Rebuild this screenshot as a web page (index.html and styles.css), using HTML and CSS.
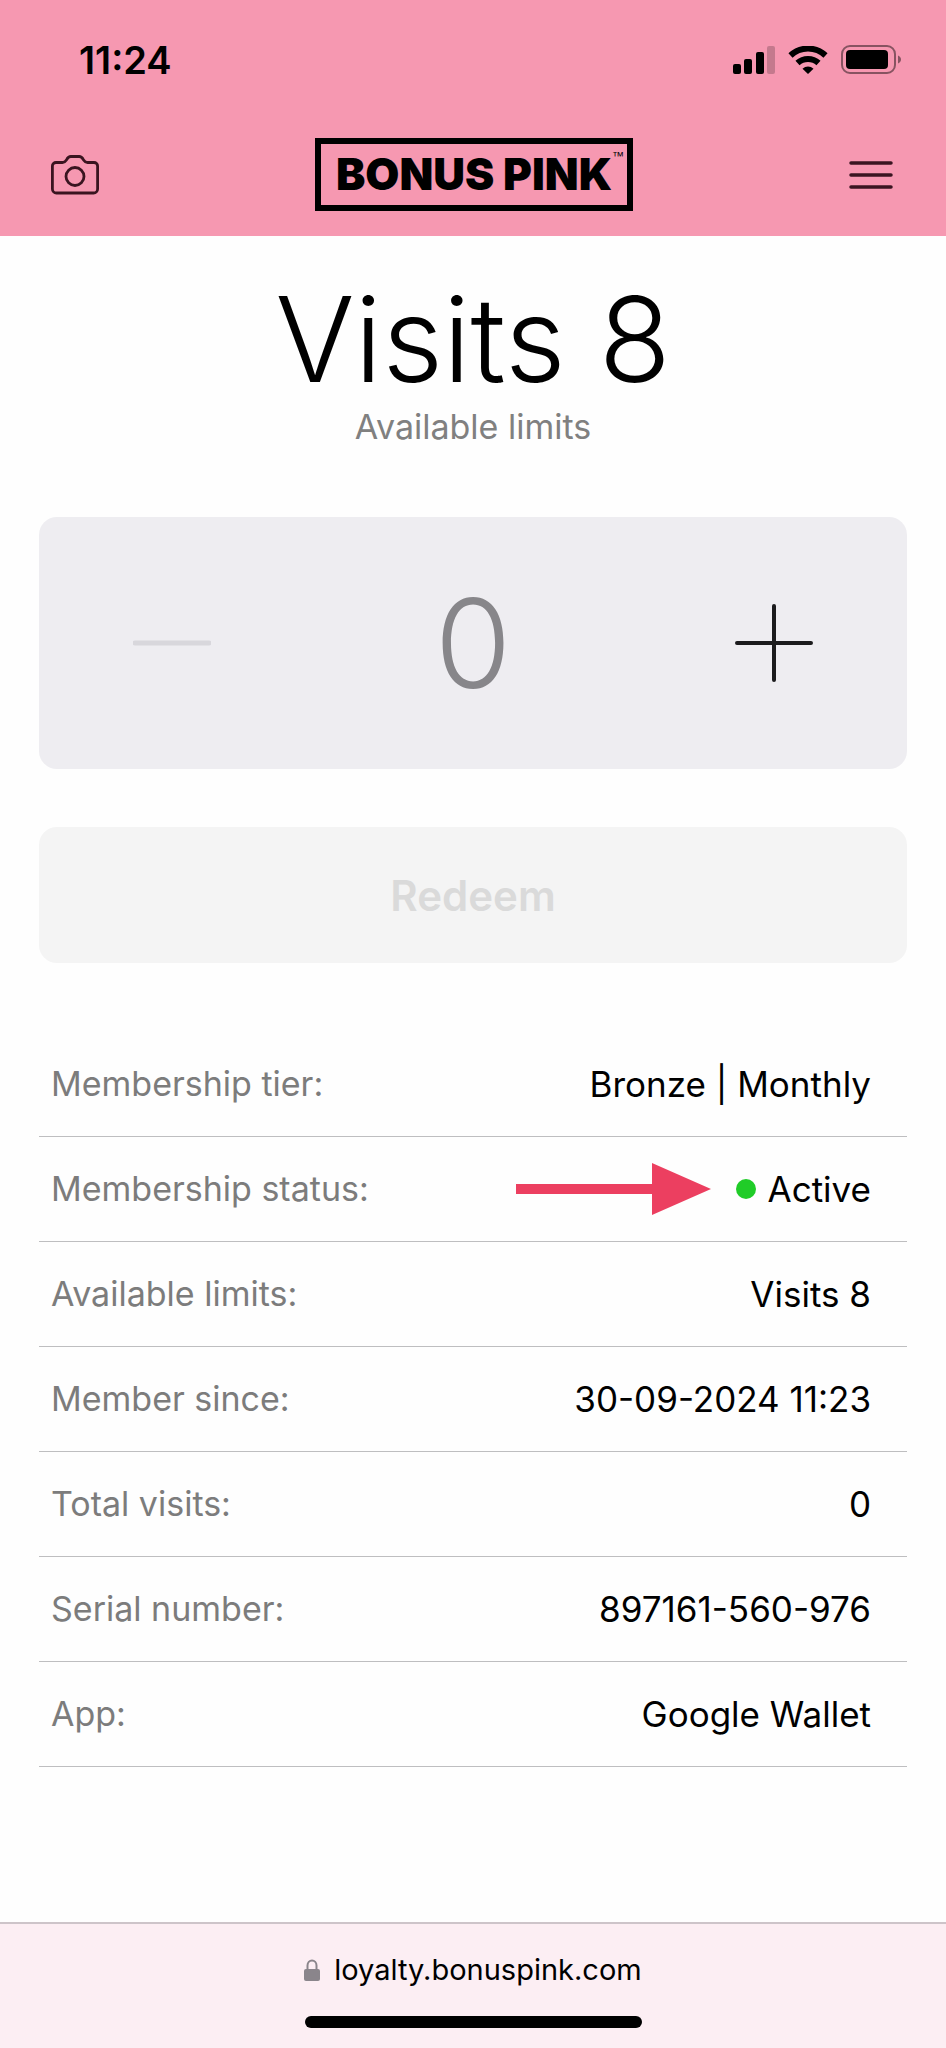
FILE: index.html
```
<!DOCTYPE html>
<html lang="en">
<head>
    <meta charset="UTF-8">
    <meta name="viewport" content="width=device-width, initial-scale=1.0">
    <title>Bonus Pink</title>
    <link rel="stylesheet" href="styles.css">
</head>
<body>
    <header class="header">
        <div class="status-bar">
            <span class="time">11:24</span>
            <div class="status-icons">
                <svg width="42" height="28" viewBox="0 0 42 28">
                    <rect x="0" y="18" width="8" height="10" rx="2"/>
                    <rect x="11" y="13" width="8" height="15" rx="2"/>
                    <rect x="23" y="6" width="8" height="22" rx="2"/>
                    <rect x="34" y="0" width="8" height="28" rx="2" opacity="0.2"/>
                </svg>
                <svg width="40" height="28" viewBox="0 0 40 28">
                    <path d="M2.5 9.5a25.500 25.500 0 0 1 35 0" fill="none" stroke="#000" stroke-width="6"/>
                    <path d="M9.500 17a15.500 15.500 0 0 1 21 0" fill="none" stroke="#000" stroke-width="6"/>
                    <path d="M20 28l-5.500-5.200a8 8 0 0 1 11 0z"/>
                </svg>
                <svg width="61" height="29" viewBox="0 0 61 29">
                    <rect x="1" y="1" width="53" height="27" rx="8" fill="none" stroke="#000" stroke-width="2" opacity="0.45"/>
                    <rect x="5" y="5" width="42" height="19" rx="4"/>
                    <path d="M57 10.500c4 1.500 4 6.500 0 8z" opacity="0.45"/>
                </svg>
            </div>
        </div>
        <nav class="navbar">
            <button type="button" class="icon-button" aria-label="Scan">
                <svg width="48" height="40" viewBox="0 0 48 40" fill="none" stroke="#3a1420" stroke-width="2.800" stroke-linejoin="round">
                    <path d="M5 7.500h6.500c2.500 0 3.200-1.500 4.200-3 1-1.700 1.800-3 4-3h8.600c2.200 0 3 1.300 4 3 1 1.500 1.700 3 4.200 3H43a3.600 3.600 0 0 1 3.600 3.600V34a4 4 0 0 1-4 4H5.400a4 4 0 0 1-4-4V11.100A3.600 3.600 0 0 1 5 7.500z"/>
                    <circle cx="24" cy="21.500" r="9"/>
                </svg>
            </button>
            <a href="#" class="logo">BONUS PINK<span class="tm">™</span></a>
            <button type="button" class="icon-button" aria-label="Menu">
                <svg width="44" height="40" viewBox="0 0 44 40" stroke="#3a1420" stroke-width="3.500" stroke-linecap="round">
                    <path d="M2 8h40M2 20h40M2 32h40"/>
                </svg>
            </button>
        </nav>
    </header>

    <main class="content">
        <h1 class="title">Visits 8</h1>
        <p class="subtitle">Available limits</p>

        <div class="stepper">
            <button type="button" id="minus" aria-label="Decrease" disabled>
                <svg width="78" height="78" viewBox="0 0 78 78" stroke="#d8d7dc" stroke-width="5" stroke-linecap="round">
                    <path d="M2 39h74"/>
                </svg>
            </button>
            <output class="count">0</output>
            <button type="button" id="plus" aria-label="Increase">
                <svg width="78" height="78" viewBox="0 0 78 78" stroke="#1b1b1d" stroke-width="4" stroke-linecap="round">
                    <path d="M2 39h74M39 2v74"/>
                </svg>
            </button>
        </div>

        <button type="button" class="redeem" disabled>Redeem</button>

        <table class="details">
            <tr>
                <th scope="row">Membership tier:</th>
                <td>Bronze | Monthly</td>
            </tr>
            <tr>
                <th scope="row">Membership status:</th>
                <td>
                    <div class="state">
                        <svg class="arrow" width="195" height="52" viewBox="0 0 195 52" fill="#ec3f60">
                            <path d="M0 21h136V0l59 26-59 26V31H0z"/>
                        </svg>
                        <span class="dot"></span>
                        <span>Active</span>
                    </div>
                </td>
            </tr>
            <tr>
                <th scope="row">Available limits:</th>
                <td>Visits 8</td>
            </tr>
            <tr>
                <th scope="row">Member since:</th>
                <td>30-09-2024 11:23</td>
            </tr>
            <tr>
                <th scope="row">Total visits:</th>
                <td>0</td>
            </tr>
            <tr>
                <th scope="row">Serial number:</th>
                <td>897161-560-976</td>
            </tr>
            <tr>
                <th scope="row">App:</th>
                <td>Google Wallet</td>
            </tr>
        </table>
    </main>

    <footer class="browser-bar">
        <div class="address">
            <svg width="16" height="22" viewBox="0 0 16 22">
                <path d="M3.500 11V6.500a4.500 5 0 0 1 9 0V11" fill="none" stroke="#8a858b" stroke-width="2"/>
                <rect x="0" y="10" width="16" height="12" rx="2" fill="#8a858b"/>
            </svg>
            <span>loyalty.bonuspink.com</span>
        </div>
        <div class="home-indicator"></div>
    </footer>
</body>
</html>
```
FILE: styles.css
```
* {
    box-sizing: border-box;
}
body {
    font-family: Inter, "Liberation Sans", sans-serif;
    margin: 0;
    min-height: 100vh;
    display: flex;
    flex-direction: column;
    background: #fefefe;
    color: #000;
}
button {
    padding: 0;
    border: none;
    background: none;
    font-family: inherit;
    cursor: pointer;
}
button:disabled {
    cursor: default;
}
svg {
    display: block;
}
.header {
    background: #f698b1;
}
.status-bar {
    display: flex;
    justify-content: space-between;
    align-items: center;
    height: 113px;
    padding: 6px 44px 0 79px;
}
.time {
    font-size: 38px;
    font-weight: 600;
}
.status-icons {
    display: flex;
    align-items: center;
    gap: 13px;
}
.navbar {
    display: flex;
    justify-content: space-between;
    align-items: center;
    height: 123px;
    padding: 0 53px 0 51px;
}
.logo {
    position: relative;
    padding: 0 15px;
    border: 6px solid #000;
    color: #000;
    font-size: 44px;
    font-weight: 900;
    line-height: 61px;
    text-decoration: none;
    white-space: nowrap;
}
.tm {
    position: absolute;
    top: 4px;
    right: 3px;
    font-family: "Liberation Sans", sans-serif;
    font-size: 12px;
    font-weight: 400;
    line-height: 16px;
}
.content {
    flex: 1;
    padding: 41px 39px;
}
.title {
    margin: 0;
    font-size: 118px;
    font-weight: 300;
    line-height: 124px;
    text-align: center;
}
.subtitle {
    margin: 0;
    color: #808080;
    font-size: 34px;
    line-height: 52px;
    text-align: center;
}
.stepper {
    display: grid;
    grid-template-columns: 266px 1fr 266px;
    align-items: center;
    height: 252px;
    margin-top: 64px;
    border-radius: 18px;
    background: #eeedf1;
}
.stepper button {
    display: flex;
    justify-content: center;
}
.count {
    color: #87868a;
    font-size: 124px;
    font-weight: 300;
    line-height: 124px;
    text-align: center;
}
.redeem {
    display: block;
    width: 100%;
    height: 136px;
    margin-top: 58px;
    border-radius: 18px;
    background: #f4f4f4;
    color: #dadada;
    font-size: 42px;
    font-weight: 600;
}
.details {
    width: 100%;
    margin-top: 69px;
    border-collapse: separate;
    border-spacing: 0;
    line-height: 52px;
}
.details th,
.details td {
    height: 105px;
    padding: 0;
    border-bottom: 1px solid #bebec0;
}
.details th {
    padding-left: 12px;
    color: #7c7c7c;
    font-size: 34px;
    font-weight: 400;
    text-align: left;
}
.details td {
    padding-right: 36px;
    font-size: 35px;
    text-align: right;
}
.state {
    display: flex;
    justify-content: flex-end;
    align-items: center;
}
.arrow {
    margin-right: 25px;
}
.dot {
    width: 20px;
    height: 20px;
    margin-right: 12px;
    border-radius: 50%;
    background: #20cc28;
}
.browser-bar {
    padding: 20px 0;
    border-top: 2px solid #cdc4c9;
    background: #fceef3;
}
.address {
    display: flex;
    justify-content: center;
    align-items: center;
    gap: 14px;
    font-size: 29px;
    line-height: 52px;
}
.home-indicator {
    width: 337px;
    height: 12px;
    margin: 20px auto 0;
    border-radius: 6px;
    background: #000;
}
```
